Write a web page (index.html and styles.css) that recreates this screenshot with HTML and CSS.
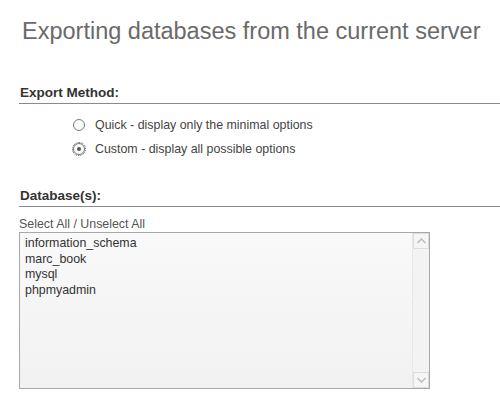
FILE: index.html
```html
<!DOCTYPE html>
<html>
<head>
<meta charset="utf-8">
<link rel="stylesheet" href="styles.css">
</head>
<body>
<div class="page">
  <h1 class="title">Exporting databases from the current server</h1>

  <h2 class="section-head">Export Method:</h2>
  <div class="options">
    <label class="option">
      <span class="radio"></span>
      <span>Quick - display only the minimal options</span>
    </label>
    <label class="option">
      <span class="radio checked"><span class="dot"></span></span>
      <span>Custom - display all possible options</span>
    </label>
  </div>

  <h2 class="section-head db-head">Database(s):</h2>
  <div class="select-links">Select All / Unselect All</div>
  <div class="listbox">
    <ul class="items">
      <li>information_schema</li>
      <li>marc_book</li>
      <li>mysql</li>
      <li>phpmyadmin</li>
    </ul>
    <div class="scrollbar">
      <div class="arrow up">
        <svg width="11" height="8" viewBox="0 0 11 8"><path d="M1.5 6 L5.5 2 L9.5 6" fill="none" stroke="#b8b8b8" stroke-width="1.3"/></svg>
      </div>
      <div class="track"></div>
      <div class="arrow down">
        <svg width="11" height="8" viewBox="0 0 11 8"><path d="M1.5 2 L5.5 6 L9.5 2" fill="none" stroke="#b8b8b8" stroke-width="1.3"/></svg>
      </div>
    </div>
  </div>
</div>
</body>
</html>
```

FILE: styles.css
```css
html, body {
  margin: 0;
  padding: 0;
  background: #ffffff;
}

.page {
  font-family: "Liberation Sans", Arial, sans-serif;
  color: #3a3a3a;
  padding: 18px 0 0 19px;
}

.title {
  margin: 0 0 0 3px;
  font-size: 23.5px;
  font-weight: normal;
  color: #6a6a6a;
  line-height: 26px;
}

.section-head {
  margin: 41px 0 0 0;
  font-size: 13.5px;
  font-weight: bold;
  color: #333333;
  line-height: 15px;
  padding-bottom: 3px;
  border-bottom: 1px solid #8a8a8a;
  padding-left: 1px;
}

.options {
  display: flex;
  flex-direction: column;
  gap: 8px;
  padding: 13px 0 0 54px;
}

.option {
  display: flex;
  align-items: center;
  gap: 10px;
  font-size: 12.4px;
  line-height: 16px;
  color: #444444;
}

.radio {
  width: 10px;
  height: 10px;
  border: 1px solid #7a7a7a;
  border-radius: 50%;
  background: #fbfbfb;
  display: flex;
  align-items: center;
  justify-content: center;
  box-sizing: content-box;
}

.radio.checked {
  outline: 1px dotted #555;
  outline-offset: 0px;
}

.dot {
  width: 4px;
  height: 4px;
  border-radius: 50%;
  background: #555555;
}

.db-head {
  margin-top: 31px;
}

.select-links {
  margin-top: 10px;
  font-size: 12.4px;
  line-height: 14px;
  color: #555555;
}

.listbox {
  margin-top: 1px;
  width: 409px;
  height: 155px;
  border: 1px solid #a8a8a8;
  background: linear-gradient(#f9f9f9, #f1f1f1);
  display: flex;
}

.items {
  list-style: none;
  margin: 0;
  padding: 3px 0 0 5px;
  flex: 1;
  font-size: 12.4px;
  line-height: 15.5px;
  color: #333333;
}

.scrollbar {
  width: 16px;
  display: flex;
  flex-direction: column;
  background: #f3f3f3;
  border-left: 1px dotted #dddddd;
}

.arrow {
  height: 16px;
  display: flex;
  align-items: center;
  justify-content: center;
  border: 1px solid #dcdcdc;
  background: #f5f5f5;
  box-sizing: border-box;
}

.track {
  flex: 1;
}
```
